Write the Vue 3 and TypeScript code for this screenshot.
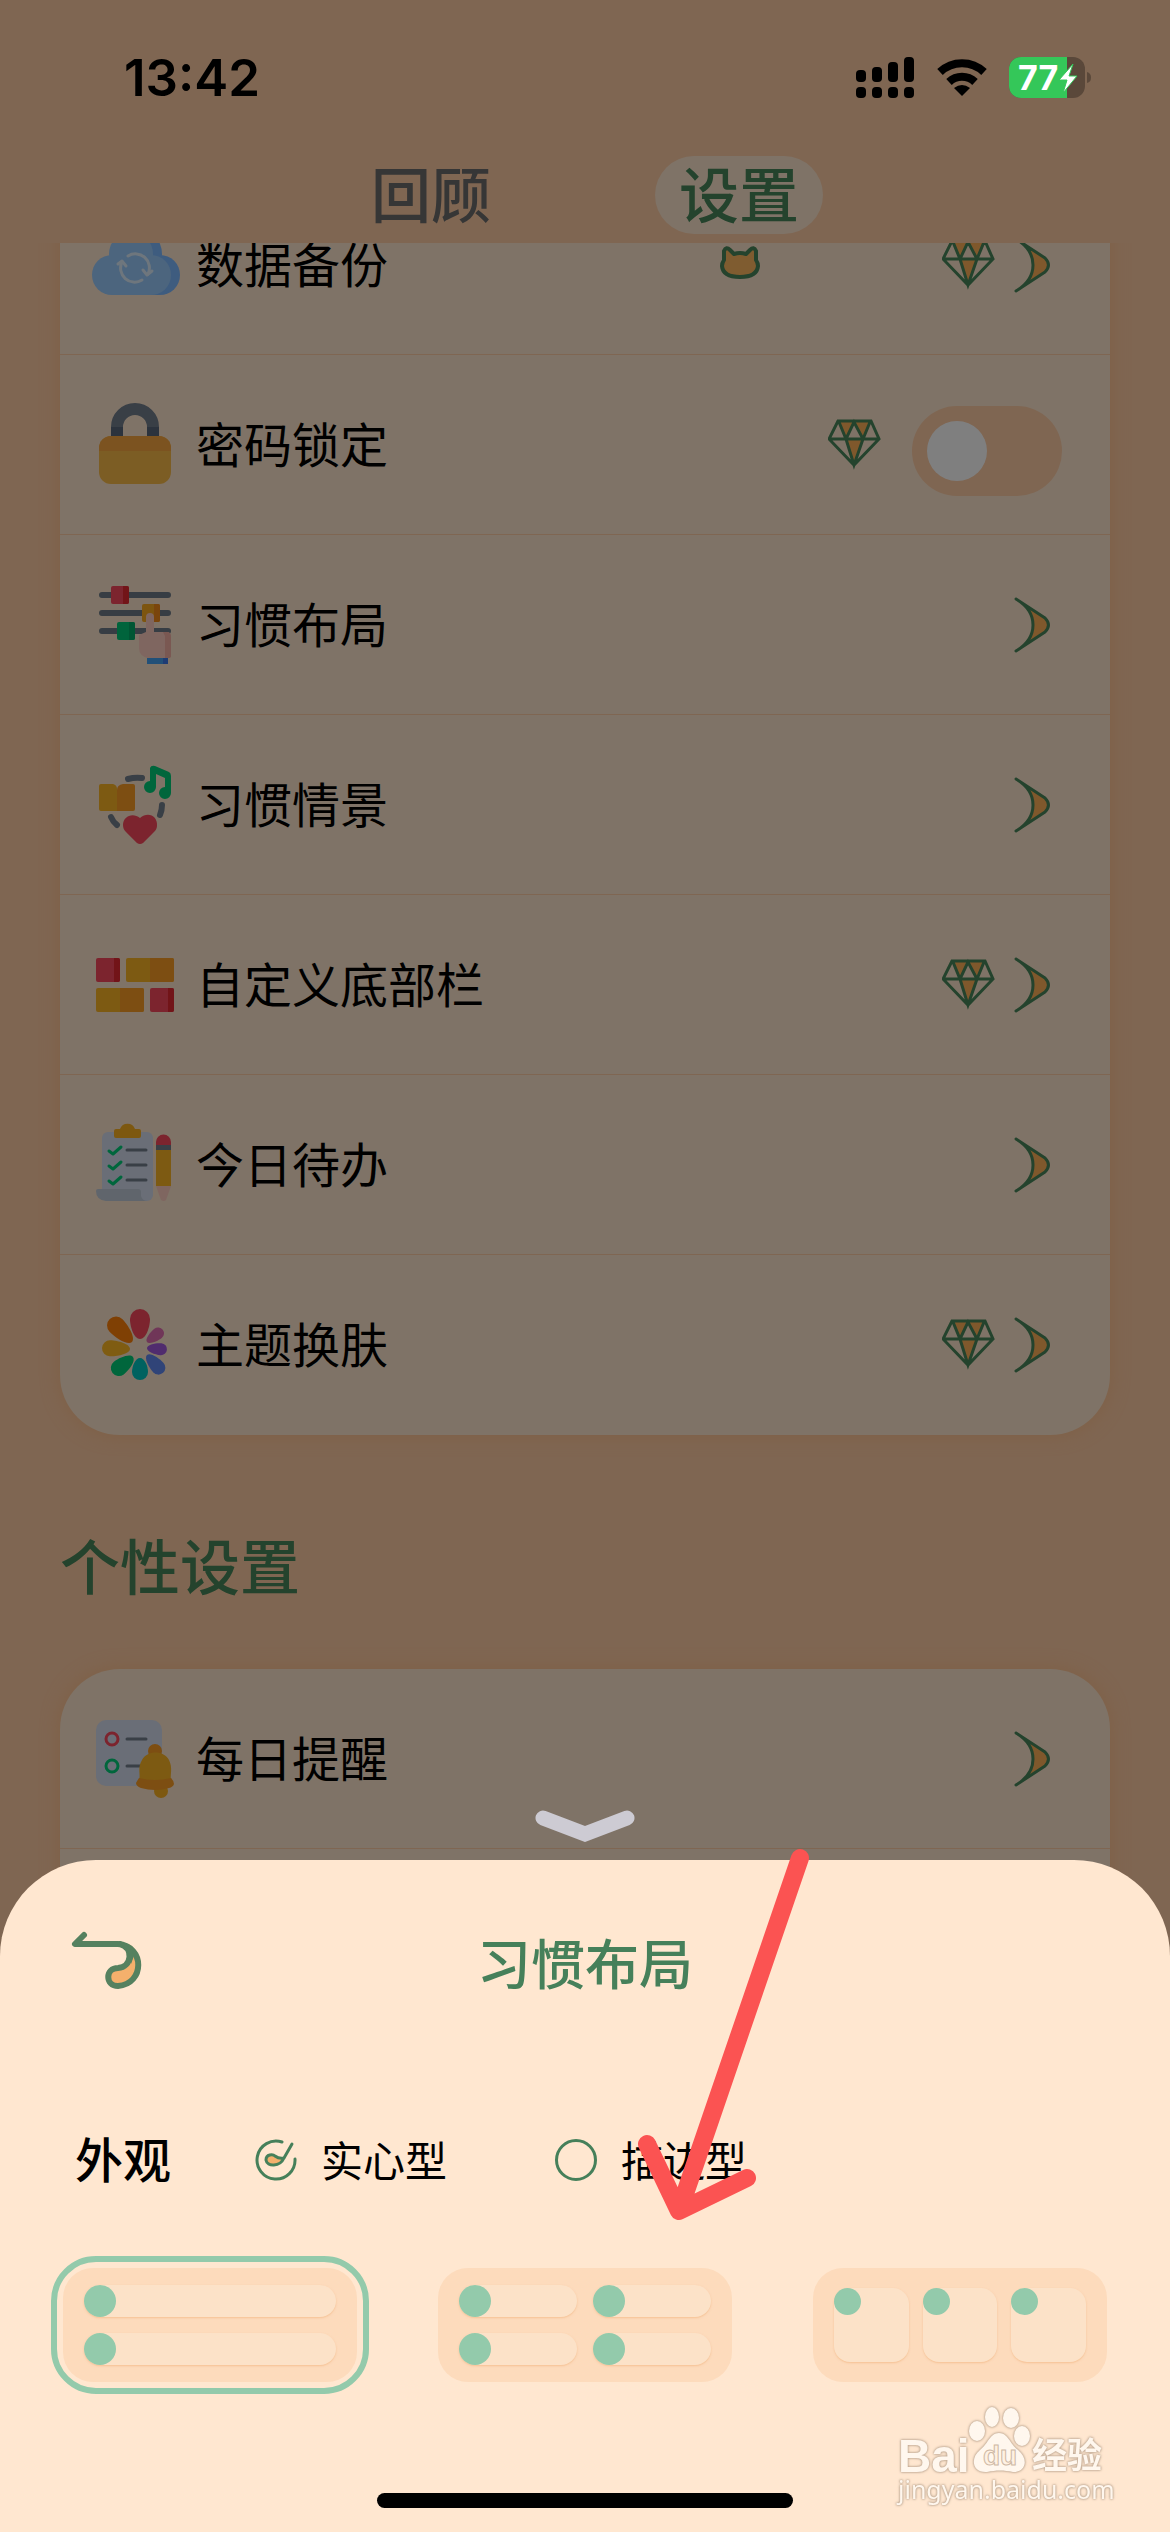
<script setup lang="ts">
import { ref } from 'vue'

interface Row {
  id: string
  label: string
  premium?: boolean
  cat?: boolean
  toggle?: boolean
}
interface Group {
  id: string
  title?: string
  rows: Row[]
}

const groups: Group[] = [
  {
    id: 'general',
    rows: [
      { id: 'backup', label: '数据备份', premium: true, cat: true },
      { id: 'lock', label: '密码锁定', premium: true, toggle: true },
      { id: 'layout', label: '习惯布局' },
      { id: 'scene', label: '习惯情景' },
      { id: 'bottombar', label: '自定义底部栏', premium: true },
      { id: 'todo', label: '今日待办' },
      { id: 'theme', label: '主题换肤', premium: true },
    ],
  },
  {
    id: 'personal',
    title: '个性设置',
    rows: [{ id: 'reminder', label: '每日提醒' }],
  },
]

const locked = ref(false)
const look = ref('solid')
const looks = [
  { id: 'solid', label: '实心型' },
  { id: 'outline', label: '描边型' },
]

const layout = ref('list')
const layouts = [
  { id: 'list', name: '单列', cells: 2 },
  { id: 'double', name: '双列', cells: 4 },
  { id: 'tiles', name: '三列', cells: 3 },
]

interface Petal { x: number; y: number; angle: number; len: number; r: number; fill: string }
const petals: Petal[] = [
  { x: 50, y: 39, angle: 0, len: 30, r: 10, fill: '#f8485c' },
  { x: 57, y: 42, angle: 52, len: 20, r: 6, fill: '#e06cb0' },
  { x: 57, y: 48, angle: 95, len: 20, r: 6, fill: '#a058dc' },
  { x: 57, y: 55, angle: 138, len: 24, r: 7, fill: '#6088f0' },
  { x: 50, y: 58, angle: 180, len: 22, r: 8, fill: '#00c4c0' },
  { x: 43, y: 57, angle: 232, len: 26, r: 8, fill: '#00cc78' },
  { x: 40, y: 49, angle: 272, len: 28, r: 8, fill: '#ffb824' },
  { x: 42, y: 42, angle: 316, len: 32, r: 9, fill: '#ff8008' },
]
function petalPath(p: Petal): string {
  const s = p.len - p.r
  return `M0 0C${-p.r * 0.6} 0 ${-p.r} ${-s * 0.6} ${-p.r} ${-s}A${p.r} ${p.r} 0 0 1 ${p.r} ${-s}C${p.r} ${-s * 0.6} ${p.r * 0.6} 0 0 0Z`
}
</script>

<template>
  <div class="screen">
    <header class="status">
      <time class="clock">13:42</time>
      <svg class="status-icons" viewBox="0 0 236 42" aria-hidden="true">
        <g fill="#000">
          <rect x="0" y="13" width="10" height="12" rx="4" />
          <rect x="16" y="10" width="10" height="15" rx="4" />
          <rect x="32" y="5" width="10" height="20" rx="4" />
          <rect x="48" y="0" width="10" height="25" rx="4" />
          <rect v-for="n in 4" :key="n" :x="(n - 1) * 16" y="30" width="10" height="11" rx="4" />
        </g>
        <g fill="none" stroke="#000" stroke-width="8">
          <path d="M84 15A32 32 0 0 1 128 15" />
          <path d="M93 25A19 19 0 0 1 119 25" />
        </g>
        <path d="M106 39L98 31Q106 25 114 31Z" />
        <rect x="153" y="0" width="76" height="41" rx="12" fill="#5a483a" />
        <path d="M165 0H211V41H165A12 12 0 0 1 153 29V12A12 12 0 0 1 165 0Z" fill="#34c759" />
        <path d="M231 15Q235 16 235 20.500Q235 25 231 26Z" fill="#5a483a" />
        <text x="162" y="33" class="battery-text">77</text>
        <path d="M217 7L203 23H211L207 36L221 19H213Z" fill="#fff" stroke="#34c759" stroke-width="1" />
      </svg>
    </header>

    <nav class="tabs">
      <button type="button" class="tab">回顾</button>
      <button type="button" class="tab tab-active">设置</button>
    </nav>

    <main class="content">
      <section v-for="g in groups" :key="g.id" class="group">
        <h2 v-if="g.title" class="group-title">{{ g.title }}</h2>
        <div class="card" :class="g.id">
          <component
            :is="r.toggle ? 'label' : 'button'"
            v-for="r in g.rows"
            :key="r.id"
            class="row"
          >
            <svg class="row-icon" viewBox="0 0 90 90" aria-hidden="true">
              <g v-if="r.id === 'backup'">
                <g fill="#7cb8ff">
                  <circle cx="70" cy="55" r="20" />
                  <circle cx="46" cy="34" r="26" />
                  <rect x="22" y="36" width="48" height="39" />
                </g>
                <g fill="#98cafc">
                  <circle cx="22" cy="55" r="20" />
                  <circle cx="61" cy="55" r="20" />
                  <circle cx="41" cy="34" r="22" />
                  <rect x="22" y="36" width="39" height="39" />
                </g>
                <g fill="none" stroke="#dcecfa" stroke-width="3" stroke-linecap="round" stroke-linejoin="round">
                  <path d="M38 36A14 14 0 0 1 58 54M52 60A14 14 0 0 1 32 42" />
                  <path d="M53 50L57 55L62 51M28 44L32 41L36 46" />
                </g>
              </g>
              <g v-else-if="r.id === 'lock'">
                <path d="M27 38V27A18 18 0 0 1 63 27V38" fill="none" stroke="#727e8c" stroke-width="12" />
                <path d="M21 27H33V38H21ZM57 27H69V38H57Z" fill="#58667a" />
                <rect x="9" y="36" width="72" height="48" rx="12" fill="#f8ba48" />
                <path d="M9 51V48A12 12 0 0 1 21 36H69A12 12 0 0 1 81 48V51Z" fill="#f8a640" />
              </g>
              <g v-else-if="r.id === 'layout'">
                <path d="M12 15H78M12 33H78M12 51H78" stroke="#6e7b88" stroke-width="6" stroke-linecap="round" />
                <rect x="21" y="6" width="18" height="18" rx="2" fill="#f8485c" />
                <path d="M33 6H37Q39 6 39 8V22Q39 24 37 24H33Z" fill="#e42830" />
                <rect x="52" y="24" width="18" height="18" rx="2" fill="#faaa20" />
                <path d="M64 24H68Q70 24 70 26V40Q70 42 68 42H64Z" fill="#f48a18" />
                <rect x="27" y="42" width="18" height="18" rx="2" fill="#00c878" />
                <path d="M39 42H43Q45 42 45 44V58Q45 60 43 60H39Z" fill="#00ac68" />
                <path d="M56 37A4 4 0 0 1 64 37V52H77Q81 52 81 57V76Q81 78 78 78H58Q49 76 49 68V55L56 52Z" fill="#ffccc0" />
                <path d="M73 52H77Q81 52 81 57V76Q81 78 78 78H75V56Z" fill="#f4b0a4" />
                <path d="M57 78H78V84H57Z" fill="#44a0f0" />
                <path d="M73 78H78V84H73Z" fill="#3c78e8" />
              </g>
              <g v-else-if="r.id === 'scene'">
                <path d="M38 19Q45 17 52 18M72 45Q72 50 70 55M21 57Q23 62 27 65" fill="none" stroke="#727e8c" stroke-width="6" stroke-linecap="round" />
                <path d="M11 24H23Q27 25 27 29V51H11Q9 51 9 49V26Q9 24 11 24Z" fill="#fab424" />
                <path d="M43 24H33Q27 25 27 30V51H43Q45 51 45 49V26Q45 24 43 24Z" fill="#fa9c24" />
                <path d="M50 58C58 51 68 56 67 66C67 69 65 71 63 73L53 83Q50 85 47 83L36 72C34 70 33 68 33 65C33 56 43 52 50 58Z" fill="#f8485c" />
                <path d="M60 8Q61 5 65 6L79 12Q81 13 81 16V33A6 6 0 1 1 75 27V18L66 14V27A6 6 0 1 1 60 21Z" fill="#00cc78" />
              </g>
              <g v-else-if="r.id === 'bottombar'">
                <rect x="6" y="18" width="24" height="24" rx="2" fill="#f8485c" />
                <path d="M24 18H28Q30 18 30 20V40Q30 42 28 42H24Z" fill="#e42830" />
                <rect x="36" y="18" width="48" height="24" rx="2" fill="#fab424" />
                <path d="M60 18H82Q84 18 84 20V40Q84 42 82 42H60Z" fill="#fa9c24" />
                <rect x="6" y="48" width="48" height="24" rx="2" fill="#fab424" />
                <path d="M30 48H52Q54 48 54 50V70Q54 72 52 72H30Z" fill="#fa9c24" />
                <rect x="60" y="48" width="24" height="24" rx="2" fill="#f8485c" />
                <path d="M78 48H82Q84 48 84 50V70Q84 72 82 72H78Z" fill="#e42830" />
              </g>
              <g v-else-if="r.id === 'todo'">
                <rect x="12" y="12" width="51" height="69" rx="6" fill="#d4dcee" />
                <path d="M8 69H48Q51 69 51 72V76Q52 81 58 81H16Q6 80 6 71Q6 69 8 69Z" fill="#c0cad8" />
                <path d="M26 9H30A8 8 0 0 1 45 9H49Q51 9 51 11V16Q51 18 49 18H26Q24 18 24 16V11Q24 9 26 9Z" fill="#fab020" />
                <path v-for="n in 3" :key="n" :d="`M19 ${16 + n * 15}L23 ${19 + n * 15}L31 ${12 + n * 15}`" fill="none" stroke="#00cc78" stroke-width="3" stroke-linecap="round" stroke-linejoin="round" />
                <path d="M37 30H56M37 45H56M37 60H56" stroke="#727e8c" stroke-width="3" stroke-linecap="round" />
                <path d="M66 26V22A7 7 0 0 1 81 22V26Z" fill="#f8485c" />
                <path d="M66 25H81V30H66Z" fill="#727e8c" />
                <path d="M66 30H81V66H66Z" fill="#fab424" />
                <path d="M66 66H81L76 80Q74 82 71 80Z" fill="#ffccc0" />
              </g>
              <g v-else-if="r.id === 'theme'">
                <path v-for="p in petals" :key="p.fill" :d="petalPath(p)" :fill="p.fill" :transform="`translate(${p.x} ${p.y}) rotate(${p.angle})`" />
              </g>
              <g v-else>
                <rect x="6" y="6" width="66" height="66" rx="10" fill="#d4dcee" />
                <circle cx="22" cy="25" r="6" fill="none" stroke="#f8485c" stroke-width="3" />
                <circle cx="22" cy="52" r="6" fill="none" stroke="#00cc78" stroke-width="3" />
                <path d="M37 25H56M37 52H52" stroke="#727e8c" stroke-width="3" stroke-linecap="round" />
                <circle cx="65" cy="37" r="7" fill="#fa9c24" />
                <circle cx="71" cy="77" r="7" fill="#fab020" />
                <path d="M49 66C51 61 47 54 52 46C57 36 74 36 79 46C83 54 80 61 81 66Z" fill="#fab424" />
                <path d="M49 64Q65 68 81 64Q84 67 84 70Q83 73 79 74Q65 78 51 74Q46 72 46 69Q47 67 49 64Z" fill="#fa9c24" />
              </g>
            </svg>
            <span class="row-label">{{ r.label }}</span>
            <svg v-if="r.cat" class="cat" viewBox="0 0 40 40" aria-hidden="true">
              <path d="M4 6Q6 1 10 5L14 9Q20 7 26 9L30 5Q34 1 36 6V15Q38 18 38 21Q37 32 20 32Q3 32 2 21Q2 18 4 15Z" fill="#ffb860" stroke="#48865a" stroke-width="4" stroke-linejoin="round" />
            </svg>
            <svg v-if="r.premium" class="gem" viewBox="0 0 54 60" aria-hidden="true">
              <path d="M11 7H26L18 24ZM26 7H42L35 24ZM18 24H35L26 50Z" fill="#ffb058" />
              <path d="M10 6H43L51 24L26 50L1 24ZM1 24H51M11 7L18 24L26 7L35 24L42 7M18 24L26 50L35 24" fill="none" stroke="#48865a" stroke-width="3" />
            </svg>
            <input v-if="r.toggle" v-model="locked" type="checkbox" class="switch" />
            <svg v-else class="go" viewBox="0 0 54 60" aria-hidden="true">
              <path d="M8 4L37 23Q44 30 37 37L8 56Q25 46 25 30Q25 14 8 4Z" fill="#ffb058" stroke="#48865a" stroke-width="3" stroke-linejoin="round" />
            </svg>
          </component>
        </div>
      </section>
    </main>

    <div class="overlay">
      <svg class="grip" viewBox="0 0 102 32" aria-hidden="true">
        <path d="M9 8L51 24L93 8" fill="none" stroke="#cdcbd3" stroke-width="15" stroke-linecap="round" />
      </svg>
      <section class="sheet" role="dialog" aria-labelledby="sheet-title">
        <div class="sheet-head">
          <button type="button" class="back" aria-label="返回">
            <svg viewBox="0 0 90 90" aria-hidden="true">
              <path d="M69 24Q81 32 78 46C76 58 68 66 57 66C45 66 45 48 57 48C67 48 75 36 69 28Z" fill="#f4b06c" />
              <path d="M24 15L15 24H58C85 26 85 64 58 66C45 66 45 48 58 48C72 47 74 28 60 24" fill="none" stroke="#55815f" stroke-width="6" stroke-linecap="round" stroke-linejoin="round" />
              <path d="M60 22Q72 26 74 36L71 44Q71 30 60 24Z" fill="#55815f" />
            </svg>
          </button>
          <h1 id="sheet-title" class="sheet-title">习惯布局</h1>
        </div>

        <div class="looks" role="radiogroup" aria-labelledby="look-title">
          <strong id="look-title" class="looks-title">外观</strong>
          <label v-for="l in looks" :key="l.id" class="look">
            <span class="mark">
              <input v-model="look" type="radio" name="look" :value="l.id" class="radio" />
              <svg v-if="look === l.id" class="tick" viewBox="0 0 42 42" aria-hidden="true">
                <path d="M27 3A19 19 0 1 0 40 20" fill="none" stroke="#46805a" stroke-width="3" stroke-linecap="round" />
                <path d="M37 5L29 19C25 28 12 28 11 21C11 15 18 15 20 17Q24 20 29 19" fill="#f4b06c" stroke="#46805a" stroke-width="3" stroke-linecap="round" stroke-linejoin="round" />
              </svg>
            </span>
            <span class="look-label">{{ l.label }}</span>
          </label>
        </div>

        <div class="layouts">
          <button
            v-for="o in layouts"
            :key="o.id"
            type="button"
            class="choice"
            :class="{ chosen: layout === o.id }"
            :aria-label="o.name"
            :aria-pressed="layout === o.id"
            @click="layout = o.id"
          >
            <span class="preview" :class="o.id">
              <span v-for="n in o.cells" :key="n" class="cell"><span class="dot"></span></span>
            </span>
          </button>
        </div>

        <div class="home"></div>
      </section>
    </div>

    <svg class="arrow" viewBox="0 0 120 372" aria-hidden="true">
      <path d="M163 10L42 363M10 296L42 363L110 330" fill="none" stroke="#fb5352" stroke-width="18" stroke-linecap="round" stroke-linejoin="round" />
    </svg>

    <svg class="watermark" viewBox="0 0 240 110" aria-label="Baidu 经验">
      <g class="mark-fill">
        <text x="6" y="68" class="wm-bai">Bai</text>
        <ellipse cx="85" cy="27" rx="8" ry="10" />
        <ellipse cx="100" cy="13" rx="7" ry="10" />
        <ellipse cx="119" cy="14" rx="8" ry="10" />
        <ellipse cx="130" cy="32" rx="8" ry="10" />
        <path d="M107 29C116 29 118 40 126 46C137 55 134 68 121 68C112 66 104 66 95 68C80 69 78 54 88 46C96 40 98 29 107 29Z" />
        <text x="140" y="64" class="wm-cn">经验</text>
        <text x="6" y="95" class="wm-url">jingyan.baidu.com</text>
      </g>
      <text x="91" y="61" class="wm-du">du</text>
    </svg>
  </div>
</template>

<style>
body {
  background: #806652;
}
</style>

<style scoped>
.screen {
  position: relative;
  display: flex;
  flex-direction: column;
  height: 100vh;
  overflow: hidden;
  background: #ffcca4;
  color: #000;
  font-family: "Noto Sans CJK SC", sans-serif;
}
button {
  margin: 0;
  padding: 0;
  border: 0;
  background: none;
  color: inherit;
  font: inherit;
}
.status {
  position: relative;
  z-index: 3;
  flex: none;
  display: flex;
  align-items: center;
  justify-content: space-between;
  height: 156px;
  padding: 0 78px 0 124px;
}
.clock {
  font: 600 51px/60px Inter, sans-serif;
}
.status-icons {
  width: 236px;
  height: 42px;
}
.battery-text {
  font: 700 34px Inter, sans-serif;
  fill: #fff;
}
.tabs {
  flex: none;
  display: flex;
  justify-content: center;
  gap: 140px;
  margin-bottom: 9px;
}
.tab {
  box-sizing: border-box;
  height: 78px;
  padding: 0 24px 6px;
  border-radius: 39px;
  color: #6c6c6c;
  font-size: 60px;
  font-weight: 500;
  line-height: 72px;
}
.tab-active {
  background: #ffe6ce;
  color: #48865a;
}
.content {
  flex: 1;
  min-height: 0;
  overflow: hidden;
  padding: 0 60px;
}
.card {
  overflow: hidden;
  border-radius: 60px;
  background: #ffe6ce;
  box-shadow: 0 0 18px rgba(254, 184, 120, 0.6);
}
.general {
  margin-top: -68px;
}
.personal {
  padding-bottom: 180px;
}
.group-title {
  margin: 90px 0 60px;
  padding-bottom: 6px;
  color: #48865a;
  font-size: 60px;
  font-weight: 500;
  line-height: 78px;
}
.row {
  box-sizing: border-box;
  display: flex;
  align-items: center;
  gap: 12px;
  width: 100%;
  height: 180px;
  padding: 0 48px 0 30px;
  border-bottom: 1px solid #ffcca4;
  font-size: 48px;
  line-height: 66px;
  text-align: left;
}
.general .row:last-child {
  border-bottom-color: transparent;
}
.row-icon {
  flex: none;
  width: 90px;
  height: 90px;
}
.row-label {
  flex: 1;
  padding: 0 0 6px 4px;
}
.cat {
  flex: none;
  width: 40px;
  height: 40px;
  margin-right: 170px;
}
.gem,
.go {
  flex: none;
  width: 54px;
  height: 60px;
}
.switch {
  appearance: none;
  box-sizing: border-box;
  flex: none;
  width: 150px;
  height: 90px;
  margin: 12px 0 0 18px;
  padding: 15px;
  border-radius: 45px;
  background: #ffcca4;
}
.switch::before {
  content: "";
  display: block;
  width: 60px;
  height: 60px;
  border-radius: 50%;
  background: #fff;
}
.switch:checked::before {
  margin-left: auto;
}
.overlay {
  position: absolute;
  inset: 0;
  z-index: 2;
  display: flex;
  flex-direction: column;
  justify-content: flex-end;
  background: rgba(0, 0, 0, 0.5);
}
.grip {
  align-self: center;
  width: 102px;
  height: 32px;
  margin-bottom: 18px;
}
.sheet {
  padding: 60px 51px 24px;
  border-radius: 96px 96px 0 0;
  background: #ffe7d0;
}
.sheet-head {
  display: grid;
  grid-template-columns: 90px 1fr 90px;
  align-items: center;
  padding: 0 9px;
}
.back,
.back svg {
  display: block;
  width: 90px;
  height: 90px;
}
.sheet-title {
  margin: 0;
  padding-bottom: 6px;
  color: #46805a;
  font-size: 54px;
  font-weight: 500;
  line-height: 78px;
  text-align: center;
}
.looks {
  display: flex;
  align-items: center;
  height: 60px;
  margin-top: 120px;
  padding-left: 24px;
  font-size: 42px;
  line-height: 54px;
}
.looks-title {
  margin-right: 84px;
  padding-bottom: 6px;
  font-size: 48px;
  font-weight: 500;
}
.look {
  display: flex;
  align-items: center;
  gap: 24px;
  margin-right: 108px;
}
.look-label {
  padding-bottom: 2px;
}
.mark {
  display: grid;
  width: 42px;
  height: 42px;
}
.radio {
  appearance: none;
  box-sizing: border-box;
  grid-area: 1 / 1;
  width: 42px;
  height: 42px;
  margin: 0;
  border: 3px solid #46805a;
  border-radius: 50%;
}
.radio:checked {
  border-color: transparent;
}
.tick {
  grid-area: 1 / 1;
  width: 42px;
  height: 42px;
}
.layouts {
  display: flex;
  justify-content: space-between;
  margin-top: 66px;
}
.choice {
  padding: 6px;
  border: 6px solid transparent;
  border-radius: 45px;
}
.chosen {
  border-color: #93caab;
}
.preview {
  box-sizing: border-box;
  display: grid;
  gap: 16px;
  width: 294px;
  height: 114px;
  padding: 17px 21px;
  border-radius: 30px;
  background: #fddbbc;
}
.double {
  grid-template-columns: 1fr 1fr;
}
.tiles {
  grid-template-columns: repeat(3, 1fr);
  gap: 14px;
  padding: 20px 21px;
}
.cell {
  border-radius: 16px;
  background: #fce2c8;
  box-shadow: 0 1px 2px rgba(240, 170, 110, 0.5);
}
.dot {
  display: block;
  width: 32px;
  height: 32px;
  border-radius: 50%;
  background: #93caab;
}
.tiles .dot {
  width: 27px;
  height: 27px;
}
.home {
  width: 416px;
  height: 15px;
  margin: 99px auto 0;
  border-radius: 8px;
  background: #000;
}
.arrow {
  position: absolute;
  right: 413px;
  bottom: 312px;
  z-index: 4;
  width: 120px;
  height: 372px;
  overflow: visible;
}
.watermark {
  position: absolute;
  right: 38px;
  bottom: 18px;
  z-index: 4;
  width: 240px;
  height: 110px;
}
.mark-fill {
  fill: #fff7ee;
  filter: drop-shadow(0 0 1px #b9a08a) drop-shadow(0 0 1px #cdb8a4);
}
.wm-bai {
  font: 700 46px "Liberation Sans", sans-serif;
}
.wm-cn {
  font: 700 35px "Noto Sans CJK SC", sans-serif;
}
.wm-url {
  font: 400 25px "Noto Sans", sans-serif;
}
.wm-du {
  font: 700 28px "Liberation Sans", sans-serif;
  fill: #fff1e2;
  stroke: #cdb8a4;
  stroke-width: 1px;
}
</style>
